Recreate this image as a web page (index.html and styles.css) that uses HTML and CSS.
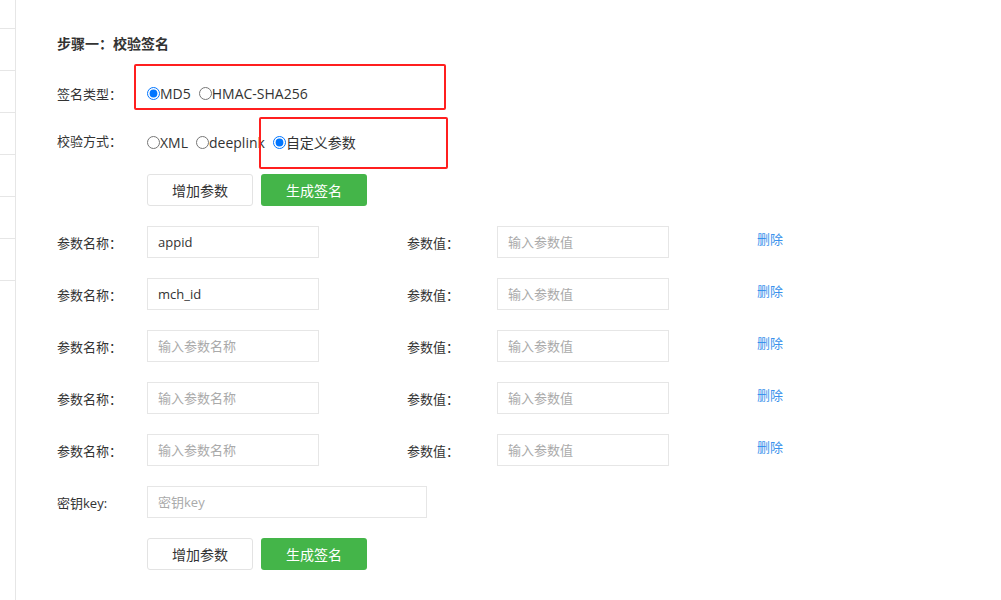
FILE: index.html
```html
<!DOCTYPE html>
<html lang="zh-CN">

    <head>
        <meta charset="UTF-8">
        <meta name="viewport" content="width=device-width, initial-scale=1.0">
        <title>校验签名</title>
        <link rel="stylesheet" href="styles.css">
    </head>

    <body>
        <div class="page">
            <aside class="side">
                <ul class="side-list">
                    <li></li>
                    <li></li>
                    <li></li>
                    <li></li>
                    <li></li>
                    <li></li>
                    <li></li>
                </ul>
            </aside>

            <main class="main">
                <h3 class="step-title">步骤一：校验签名</h3>

                <div class="row row-type">
                    <span class="label">签名类型：</span>
                    <label class="radio"><input type="radio" name="signType" checked>MD5</label>
                    <label class="radio"><input type="radio" name="signType">HMAC-SHA256</label>
                </div>

                <div class="row row-mode">
                    <span class="label label-up">校验方式：</span>
                    <label class="radio"><input type="radio" name="checkMode">XML</label>
                    <label class="radio"><input type="radio" name="checkMode">deeplink</label>
                    <label class="radio"><input type="radio" name="checkMode" checked>自定义参数</label>
                </div>

                <div class="row row-btns">
                    <span class="label"></span>
                    <button class="btn btn-default">增加参数</button>
                    <button class="btn btn-primary">生成签名</button>
                </div>

                <div id="paramList"></div>

                <div class="row">
                    <span class="label">密钥key:</span>
                    <input class="field field-key" type="text" placeholder="密钥key">
                </div>

                <div class="row">
                    <span class="label"></span>
                    <button class="btn btn-default">增加参数</button>
                    <button class="btn btn-primary">生成签名</button>
                </div>

                <div class="mark mark-type"></div>
                <div class="mark mark-mode"></div>
            </main>
        </div>

        <script>
            const params = ['appid', 'mch_id', '', '', ''];

            function renderParams() {
                let html = '';
                params.forEach(function (name) {
                    html += `
                    <div class="row param-row">
                        <div class="param-group">
                            <span class="label">参数名称：</span>
                            <input class="field" type="text" placeholder="输入参数名称" value="${name}">
                        </div>
                        <div class="param-group">
                            <span class="label">参数值：</span>
                            <input class="field" type="text" placeholder="输入参数值">
                        </div>
                        <a class="del-link" href="javascript:;">删除</a>
                    </div>
                `;
                });
                document.getElementById('paramList').innerHTML = html;
            }

            renderParams();
        </script>
    </body>

</html>
```

FILE: styles.css
```css
* {
    box-sizing: border-box;
    margin: 0;
    padding: 0;
}

body {
    background: #fff;
    color: #333;
    font-family: "Open Sans", "Noto Sans CJK SC", sans-serif;
    font-size: 13px;
}

.page {
    display: flex;
    min-height: 600px;
}

.side {
    width: 16px;
    border-right: 1px solid #e6e6e6;
    flex-shrink: 0;
}

.side-list {
    list-style: none;
}

.side-list li {
    height: 42px;
    border-bottom: 1px solid #e6e6e6;
}

.side-list li:first-child {
    height: 29px;
}

.main {
    position: relative;
    flex: 1;
    padding: 34px 0 0 41px;
}

.step-title {
    font-size: 14px;
    font-weight: 700;
    line-height: 20px;
    margin-bottom: 23px;
}

.row {
    display: flex;
    align-items: center;
    height: 32px;
    margin-bottom: 20px;
}

.row-type {
    margin-bottom: 17px;
}

.row-mode {
    margin-bottom: 16px;
}

.label {
    width: 90px;
    flex-shrink: 0;
}

.label-up {
    position: relative;
    top: -2px;
}

.radio {
    display: flex;
    align-items: center;
    font-size: 14px;
    margin-right: 8px;
    cursor: pointer;
}

.radio input {
    width: 13px;
    height: 13px;
    margin: 0;
}

.btn {
    width: 106px;
    height: 32px;
    border-radius: 3px;
    font-family: inherit;
    font-size: 14px;
    margin-right: 8px;
    cursor: pointer;
}

.btn-default {
    background: #fff;
    color: #333;
    border: 1px solid #e3e3e3;
}

.btn-primary {
    background: #44b549;
    color: #fff;
    border: none;
}

.param-group {
    display: flex;
    align-items: center;
    width: 350px;
}

.field {
    width: 172px;
    height: 32px;
    padding: 0 10px;
    border: 1px solid #e6e6e6;
    font-family: inherit;
    font-size: 13px;
    color: #333;
    outline: none;
}

.field::placeholder {
    color: #aaa;
}

.field-key {
    width: 280px;
}

.del-link {
    color: #3a92ec;
    text-decoration: none;
    position: relative;
    top: -4px;
}

.mark {
    position: absolute;
    border: 2px solid #ff1f1f;
    border-radius: 2px;
}

.mark-type {
    left: 118px;
    top: 64px;
    width: 312px;
    height: 46px;
}

.mark-mode {
    left: 243px;
    top: 117px;
    width: 189px;
    height: 52px;
}
```
